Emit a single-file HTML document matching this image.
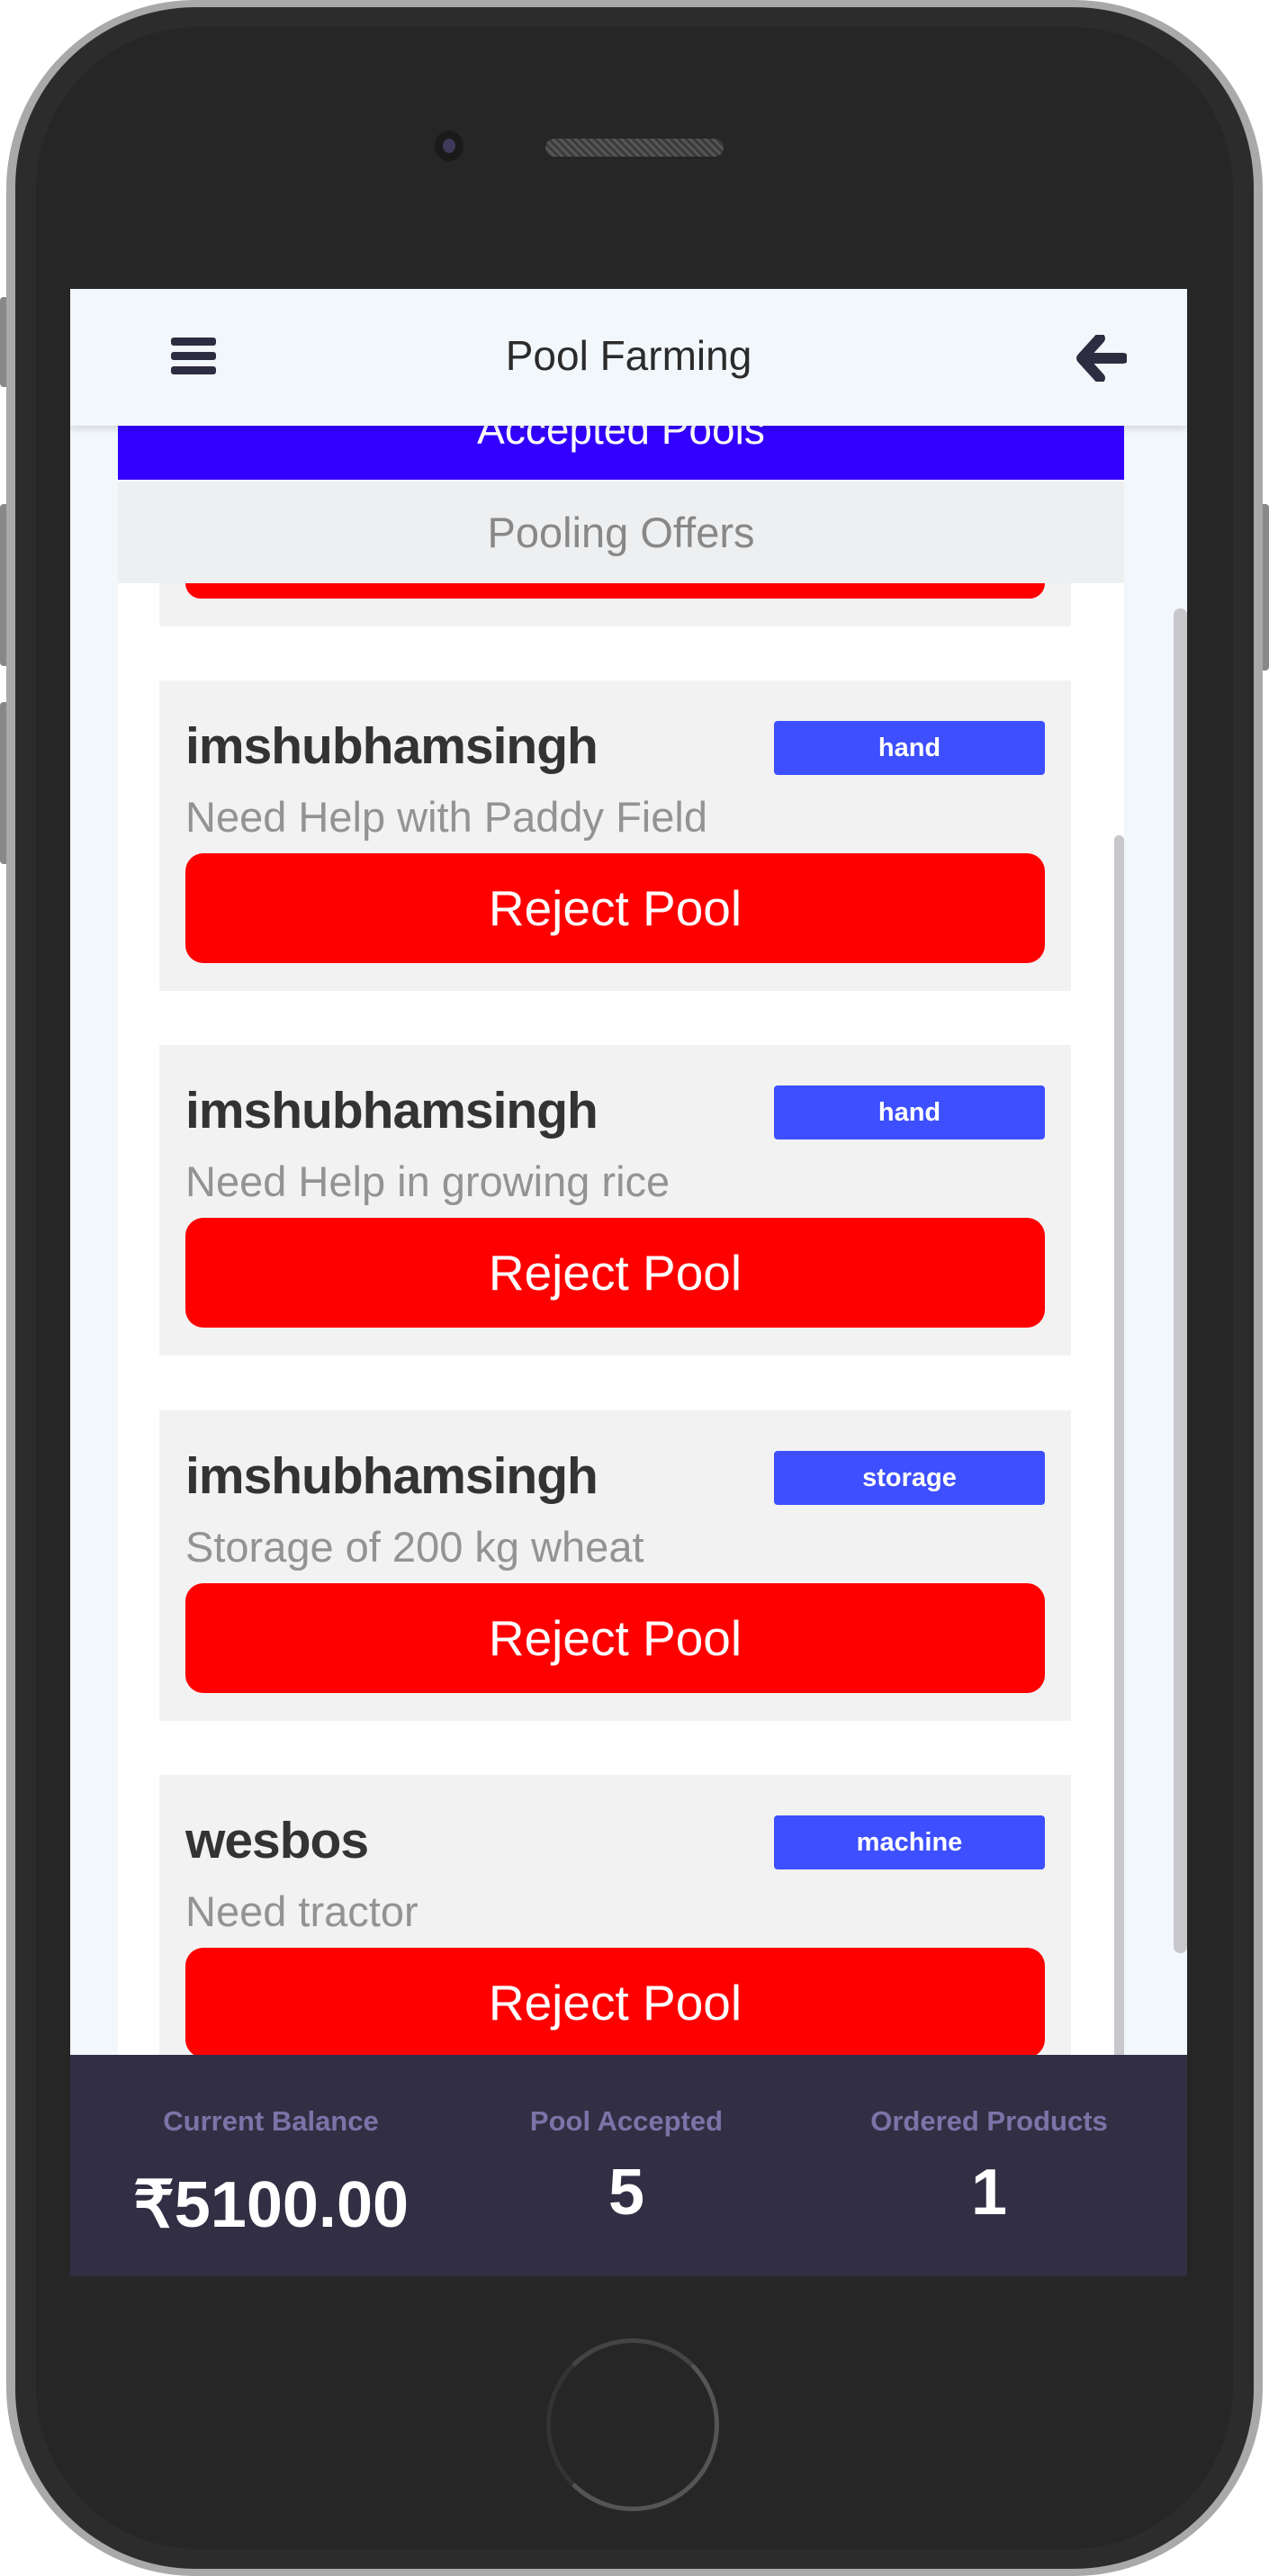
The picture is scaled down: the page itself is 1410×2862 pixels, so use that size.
<!DOCTYPE html>
<html><head><meta charset="utf-8"><style>
*{margin:0;padding:0;box-sizing:border-box}
html,body{width:1410px;height:2862px;background:#fff;overflow:hidden;font-family:"Liberation Sans",sans-serif}
.abs{position:absolute}
.phone{left:7px;top:0;width:1396px;height:2862px;border-radius:210px;background:#a9a9a9}
.p2{left:17px;top:8px;width:1376px;height:2846px;border-radius:200px;background:#2c2c2c}
.p3{left:40px;top:30px;width:1330px;height:2802px;border-radius:180px;background:#262626}
.screen{left:78px;top:321px;width:1241px;height:2208px;background:#f2f7fb;overflow:hidden}
.card{position:absolute;left:99px;width:1013px;height:345px;background:#f2f2f2}
.name{position:absolute;left:29px;top:40px;font-size:57px;font-weight:bold;color:#333;letter-spacing:-1px}
.tag{position:absolute;left:683px;top:45px;width:301px;height:60px;background:#3d4ffe;border-radius:4px;color:#fff;font-weight:bold;font-size:29px;text-align:center;line-height:60px}
.sub{position:absolute;left:29px;top:124px;font-size:47px;color:#939393}
.btn{position:absolute;left:29px;top:192px;width:955px;height:122px;background:#ff0000;border-radius:20px;color:#fff;font-size:55px;text-align:center;line-height:122px}
.lab{position:absolute;width:400px;text-align:center;font-size:31px;font-weight:bold;color:#7b74a8}
.val{position:absolute;width:400px;text-align:center;font-size:72px;font-weight:bold;color:#fff}
</style></head><body>
<div class="abs" style="left:0;top:330px;width:10px;height:100px;background:#888;border-radius:4px"></div>
<div class="abs" style="left:0;top:560px;width:10px;height:180px;background:#888;border-radius:4px"></div>
<div class="abs" style="left:0;top:780px;width:10px;height:180px;background:#888;border-radius:4px"></div>
<div class="abs" style="left:1400px;top:560px;width:10px;height:185px;background:#888;border-radius:4px"></div>
<div class="abs phone"></div>
<div class="abs p2"></div>
<div class="abs p3"></div>
<div class="abs" style="left:483px;top:145px;width:32px;height:34px;border-radius:50%;background:#1a1a1a"></div>
<div class="abs" style="left:492px;top:154px;width:14px;height:16px;border-radius:50%;background:#3e3a5a"></div>
<div class="abs" style="left:606px;top:154px;width:198px;height:20px;border-radius:10px;background:repeating-linear-gradient(45deg,#555 0 3px,#3a3a3a 3px 6px)"></div>
<div class="abs" style="left:607px;top:2598px;width:192px;height:192px;border-radius:50%;border:5px solid #555;border-left-color:#333;border-top-color:#444"></div>
<div class="abs screen">
  <div class="abs" style="left:53px;top:0;width:1118px;height:2208px;background:#fff"></div>
  <div class="abs" style="left:53px;top:152px;width:1118px;height:60px;background:#3300ff;color:#fff;font-size:46px;text-align:center;line-height:8px;overflow:hidden">Accepted Pools</div>
  <div class="abs" style="left:53px;top:214px;width:1118px;height:113px;background:#eeeff1;color:#888;font-size:47px;text-align:center;line-height:113px">Pooling Offers</div>
  <div class="abs" style="left:99px;top:327px;width:1013px;height:48px;background:#f2f2f2"></div>
  <div class="abs" style="left:128px;top:327px;width:955px;height:17px;background:#f00;border-radius:0 0 18px 18px"></div>
  <div class="card" style="top:435px"><div class="name">imshubhamsingh</div><div class="tag">hand</div><div class="sub">Need Help with Paddy Field</div><div class="btn">Reject Pool</div></div>
  <div class="card" style="top:840px"><div class="name">imshubhamsingh</div><div class="tag">hand</div><div class="sub">Need Help in growing rice</div><div class="btn">Reject Pool</div></div>
  <div class="card" style="top:1246px"><div class="name">imshubhamsingh</div><div class="tag">storage</div><div class="sub">Storage of 200 kg wheat</div><div class="btn">Reject Pool</div></div>
  <div class="card" style="top:1651px"><div class="name">wesbos</div><div class="tag">machine</div><div class="sub">Need tractor</div><div class="btn">Reject Pool</div></div>
  <div class="abs" style="left:1160px;top:607px;width:11px;height:1400px;background:#c8c8cc;border-radius:5px"></div>
  <div class="abs" style="left:1226px;top:355px;width:15px;height:1494px;background:#c8c8cc;border-radius:7px"></div>
  <div class="abs" style="left:0;top:0;width:1241px;height:152px;background:#f2f7fb;box-shadow:0 4px 8px rgba(0,0,0,.12)">
    <div class="abs" style="left:112px;top:54px;width:50px;height:9px;background:#2e2c40;border-radius:3px"></div>
    <div class="abs" style="left:112px;top:70px;width:50px;height:9px;background:#2e2c40;border-radius:3px"></div>
    <div class="abs" style="left:112px;top:86px;width:50px;height:9px;background:#2e2c40;border-radius:3px"></div>
    <div class="abs" style="left:0;top:47px;width:1241px;text-align:center;font-size:46px;color:#2b2b2b">Pool Farming</div>
    <svg class="abs" style="left:1118px;top:51px" width="56" height="52" viewBox="0 0 56 52"><path d="M26 4 L6 26 L26 48 M8 26 H52" stroke="#2e2c40" stroke-width="12" fill="none" stroke-linecap="round" stroke-linejoin="round"/></svg>
  </div>
  <div class="abs" style="left:0;top:1962px;width:1241px;height:246px;background:#322f44"></div>
  <div class="lab" style="left:23px;top:2018px">Current Balance</div>
  <div class="lab" style="left:418px;top:2018px">Pool Accepted</div>
  <div class="lab" style="left:821px;top:2018px">Ordered Products</div>
  <div class="val" style="left:23px;top:2086px">₹5100.00</div>
  <div class="val" style="left:418px;top:2074px">5</div>
  <div class="val" style="left:821px;top:2074px">1</div>
</div>
</body></html>
